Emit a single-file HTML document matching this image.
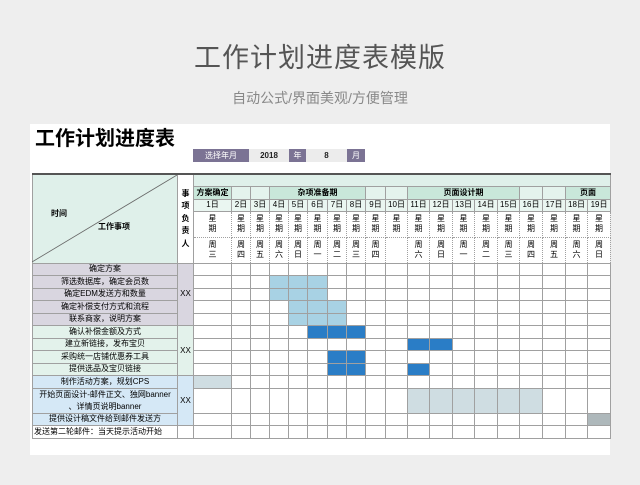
<!DOCTYPE html>
<html><head><meta charset="utf-8"><style>
*{margin:0;padding:0;box-sizing:border-box}
body{width:640px;height:485px;background:#eeeeee;font-family:"Liberation Sans","Noto Sans CJK SC",sans-serif;position:relative;overflow:hidden}
.t1{position:absolute;top:36px;left:0;width:640px;text-align:center;font-size:27px;color:#555;letter-spacing:1px}
.t2{position:absolute;top:88px;left:0;width:640px;text-align:center;font-size:14px;color:#888}
.sheet{position:absolute;left:30px;top:124px;width:580px;height:331px;background:#fff}
.h{position:absolute;left:35px;top:122px;font-size:20px;font-weight:bold;color:#000}
.sel{position:absolute;top:149px;height:13px;font-size:8px;line-height:13px;text-align:center}
.p{background:#7b7394;color:#fff}.g{background:#ececec;color:#222;font-weight:bold}
table{position:absolute;left:32px;top:173px;border-collapse:collapse;table-layout:fixed;width:578px;border-top:2px solid #555;border-bottom:1.5px solid #555}
td{border:1px solid #a0a0a0;font-size:8px;text-align:center;padding:0;overflow:hidden;white-space:nowrap;line-height:10px}
.wk td.d{border-style:dotted;background:#fff}
.lh{background:#dcedf0}
.band td{background:#dff0ea;border-top:none}
.ph{background:#c9e7da;font-weight:bold}
.pb{background:#e4f3ed}
.dy td.d{background:#eaf6f1}
.g1{background:#d9d6e0}.g2{background:#e3f2eb}.g3{background:#d5e8f6}
</style></head><body>
<div class="t1">工作计划进度表模版</div>
<div class="t2">自动公式/界面美观/方便管理</div>
<div class="sheet"></div>
<div class="h">工作计划进度表</div>
<div class="sel p" style="left:193px;width:56px">选择年月</div>
<div class="sel g" style="left:249px;width:40px">2018</div>
<div class="sel p" style="left:289px;width:17px">年</div>
<div class="sel g" style="left:306px;width:41px">8</div>
<div class="sel p" style="left:347px;width:18px">月</div>
<table id="tb">
<colgroup><col style="width:145px"><col style="width:16px"><col style="width:38px"><col style="width:19px"><col style="width:19px"><col style="width:19px"><col style="width:19px"><col style="width:20px"><col style="width:19px"><col style="width:19px"><col style="width:20px"><col style="width:22px"><col style="width:22px"><col style="width:23px"><col style="width:22px"><col style="width:23px"><col style="width:22px"><col style="width:23px"><col style="width:23px"><col style="width:22px"><col style="width:23px"></colgroup>
<tr class="band" style="height:12px"><td class="lh" rowspan="5" style="position:relative;border-top:none"></td><td rowspan="5" style="background:#fff;font-weight:bold;line-height:12.5px;white-space:normal;border-top:none">事<br>项<br>负<br>责<br>人</td><td colspan="19"></td></tr>
<tr style="height:13px"><td class="ph">方案确定</td><td class="pb"></td><td class="pb"></td><td class="ph" colspan="5">杂项准备期</td><td class="pb"></td><td class="pb"></td><td class="ph" colspan="5">页面设计期</td><td class="pb"></td><td class="pb"></td><td class="ph" colspan="2">页面</td></tr>
<tr class="dy" style="height:12px"><td class="d">1日</td><td class="d">2日</td><td class="d">3日</td><td class="d">4日</td><td class="d">5日</td><td class="d">6日</td><td class="d">7日</td><td class="d">8日</td><td class="d">9日</td><td class="d">10日</td><td class="d">11日</td><td class="d">12日</td><td class="d">13日</td><td class="d">14日</td><td class="d">15日</td><td class="d">16日</td><td class="d">17日</td><td class="d">18日</td><td class="d">19日</td></tr>
<tr class="wk" style="height:26px"><td class="d">星<br>期</td><td class="d">星<br>期</td><td class="d">星<br>期</td><td class="d">星<br>期</td><td class="d">星<br>期</td><td class="d">星<br>期</td><td class="d">星<br>期</td><td class="d">星<br>期</td><td class="d">星<br>期</td><td class="d">星<br>期</td><td class="d">星<br>期</td><td class="d">星<br>期</td><td class="d">星<br>期</td><td class="d">星<br>期</td><td class="d">星<br>期</td><td class="d">星<br>期</td><td class="d">星<br>期</td><td class="d">星<br>期</td><td class="d">星<br>期</td></tr>
<tr class="wk" style="height:26px"><td class="d">周<br>三</td><td class="d">周<br>四</td><td class="d">周<br>五</td><td class="d">周<br>六</td><td class="d">周<br>日</td><td class="d">周<br>一</td><td class="d">周<br>二</td><td class="d">周<br>三</td><td class="d">周<br>四</td><td class="d"></td><td class="d">周<br>六</td><td class="d">周<br>日</td><td class="d">周<br>一</td><td class="d">周<br>二</td><td class="d">周<br>三</td><td class="d">周<br>四</td><td class="d">周<br>五</td><td class="d">周<br>六</td><td class="d">周<br>日</td></tr>
<tr style="height:12.5px"><td class="g1">确定方案</td><td class="g1" rowspan="5">XX</td></tr>
<tr style="height:12.5px"><td class="g1">筛选数据库，确定会员数</td></tr>
<tr style="height:12.5px"><td class="g1">确定EDM发送方和数量</td></tr>
<tr style="height:12.5px"><td class="g1">确定补偿支付方式和流程</td></tr>
<tr style="height:12.5px"><td class="g1">联系商家，说明方案</td></tr>
<tr style="height:12.5px"><td class="g2">确认补偿金额及方式</td><td class="g2" rowspan="4">XX</td></tr>
<tr style="height:12.5px"><td class="g2">建立新链接，发布宝贝</td></tr>
<tr style="height:12.5px"><td class="g2">采购统一店铺优惠券工具</td></tr>
<tr style="height:12.5px"><td class="g2">提供选品及宝贝链接</td></tr>
<tr style="height:12.5px"><td class="g3">制作活动方案，规划CPS</td><td class="g3" rowspan="3">XX</td></tr>
<tr style="height:25px"><td class="g3" style="white-space:normal;line-height:12px">开始页面设计-邮件正文、独网banner<br>、详情页说明banner</td></tr>
<tr style="height:12.5px"><td class="g3">提供设计稿文件给到邮件发送方</td></tr>
<tr style="height:12.5px"><td style="text-align:left;padding-left:1px">发送第二轮邮件：当天提示活动开始</td><td></td></tr>
</table>
<svg style="position:absolute;left:32px;top:175px" width="145" height="87"><line x1="0" y1="87" x2="145" y2="0" stroke="#666" stroke-width="0.8"/></svg>
<div style="position:absolute;left:51px;top:208px;font-size:8px;font-weight:bold">时间</div>
<div style="position:absolute;left:98px;top:221px;font-size:8px;font-weight:bold">工作事项</div>
<script>
var L='#a8d2e4',D='#2a7dc6',G='#cfdde2',Y='#aeb8bb';
var bars=[{},{4:L,5:L,6:L},{4:L,5:L,6:L},{5:L,6:L,7:L},{5:L,6:L,7:L},{6:D,7:D,8:D},{11:D,12:D},{7:D,8:D},{7:D,8:D,11:D},{1:G},{11:G,12:G,13:G,14:G,15:G,16:G},{19:Y},{}];
var rows=document.getElementById('tb').rows;
for(var i=0;i<13;i++){var r=rows[5+i];for(var d=1;d<=19;d++){var c=r.insertCell(-1);if(bars[i][d])c.style.background=bars[i][d];}}
</script>
</body></html>
